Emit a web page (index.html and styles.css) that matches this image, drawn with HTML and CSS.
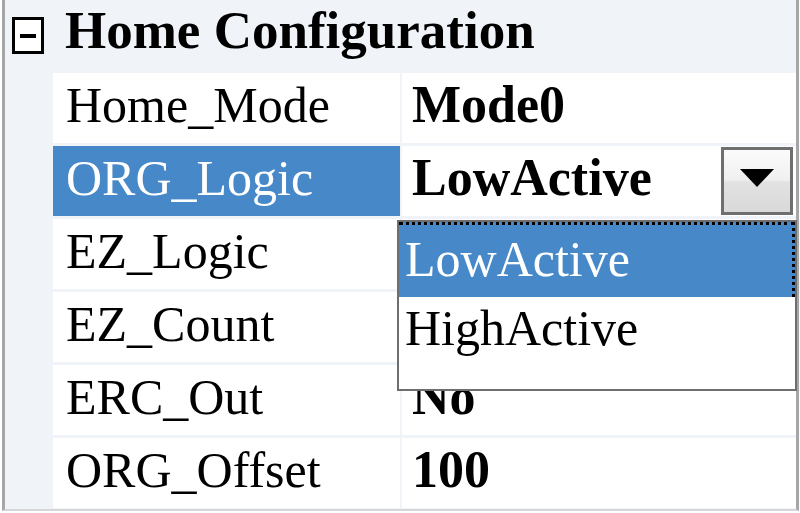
FILE: index.html
```html
<!DOCTYPE html>
<html>
<head>
<meta charset="utf-8">
<link rel="stylesheet" href="styles.css">
</head>
<body>
<div class="grid">
  <div class="cat">
    <span class="toggle"><span class="minus"></span></span>
    <span class="cat-title">Home Configuration</span>
  </div>
  <div class="row">
    <div class="name">Home_Mode</div>
    <div class="value">Mode0</div>
  </div>
  <div class="row">
    <div class="name selected">ORG_Logic</div>
    <div class="value">
      <span class="val-text">LowActive</span>
      <span class="drop-btn">
        <svg width="34" height="18" viewBox="0 0 34 18"><polygon points="0,0 34,0 17,18" fill="#000"/></svg>
      </span>
    </div>
  </div>
  <div class="row">
    <div class="name">EZ_Logic</div>
    <div class="value"></div>
  </div>
  <div class="row">
    <div class="name">EZ_Count</div>
    <div class="value"></div>
  </div>
  <div class="row">
    <div class="name">ERC_Out</div>
    <div class="value">No</div>
  </div>
  <div class="row">
    <div class="name">ORG_Offset</div>
    <div class="value">100</div>
  </div>

  <div class="popup">
    <div class="item active">LowActive</div>
    <div class="item">HighActive</div>
  </div>
</div>
</body>
</html>
```

FILE: styles.css
```css
html, body {
  margin: 0;
  padding: 0;
  background: #ffffff;
}

body {
  font-family: "Liberation Serif", "Times New Roman", serif;
  color: #000;
}

.grid {
  position: relative;
  box-sizing: border-box;
  width: 797px;
  margin-left: 2px;
  border-left: 3px solid #a6a6a6;
  border-right: 3px solid #a6a6a6;
  border-bottom: 2px solid #d4d6da;
  background: #f0f3f8;
  display: flex;
  flex-direction: column;
  gap: 3px;
  padding-bottom: 1px;
}

.cat {
  height: 70px;
  display: flex;
  align-items: flex-start;
}

.toggle {
  flex: none;
  box-sizing: border-box;
  width: 32px;
  height: 37px;
  margin: 17px 0 0 7px;
  border: 3px solid #000;
  background: #fff;
  display: flex;
  align-items: center;
  justify-content: center;
}

.minus {
  width: 16px;
  height: 4px;
  background: #000;
}

.cat-title {
  margin-left: 21px;
  font-weight: bold;
  font-size: 53px;
  line-height: 60px;
  white-space: nowrap;
}

.row {
  height: 70px;
  margin-left: 48px;
  display: grid;
  grid-template-columns: 347px 1fr;
  column-gap: 2px;
}

.name {
  background: #fff;
  padding-left: 13px;
  font-size: 50px;
  line-height: 64px;
  white-space: nowrap;
}

.name.selected {
  background: #4688c8;
  color: #fff;
}

.value {
  background: #fff;
  padding-left: 10px;
  font-size: 52px;
  font-weight: bold;
  line-height: 64px;
  white-space: nowrap;
  display: flex;
  align-items: flex-start;
}

.val-text {
  flex: 1;
}

.drop-btn {
  flex: none;
  box-sizing: border-box;
  width: 72px;
  height: 68px;
  margin: 1px 3px 0 0;
  border: 3px solid #6f6f6f;
  background: linear-gradient(#fbfbfb 0%, #f0f0f0 48%, #e2e2e2 52%, #d9d9d9 100%);
  display: flex;
  align-items: center;
  justify-content: center;
  padding-bottom: 6px;
}

.drop-btn svg {
  display: block;
}

.popup {
  position: absolute;
  left: 392px;
  top: 220px;
  box-sizing: border-box;
  width: 400px;
  height: 171px;
  border: 2px solid #6e6e6e;
  background: #fff;
}

.item {
  height: 70px;
  padding-left: 6px;
  font-size: 50px;
  line-height: 62px;
  white-space: nowrap;
}

.item.active {
  box-sizing: border-box;
  height: 75px;
  line-height: 68px;
  background: #4688c8;
  color: #fff;
  border-top: 3px dotted #000;
  border-right: 3px dotted #000;
}
```
